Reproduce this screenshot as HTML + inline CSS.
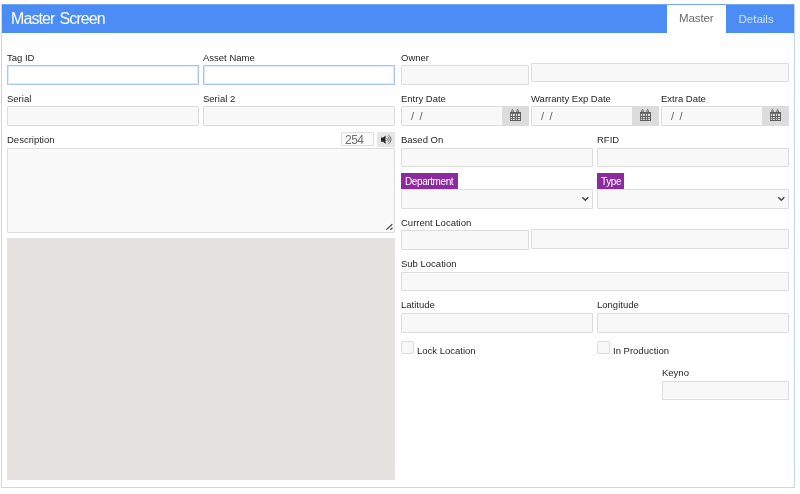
<!DOCTYPE html>
<html><head><meta charset="utf-8">
<style>
html,body{margin:0;will-change:transform;padding:0;background:#fff;width:800px;height:494px;overflow:hidden;font-family:"Liberation Sans",sans-serif;}
.a{position:absolute;box-sizing:border-box;}
.frame{left:1px;top:4px;width:794px;height:484px;border:1px solid #c2d6f8;}
.hdr{left:2px;top:4px;width:792px;height:29px;background:#4c8df5;border-top:1px solid #78a6f6;}
.title{left:11px;color:#fff;font-size:16px;letter-spacing:-0.9px;word-spacing:1.5px;top:10px;}
.tab1{left:667px;top:5px;width:59px;height:28px;background:#fff;color:#6a6a6a;font-size:11.5px;line-height:26.5px;padding-left:12px;letter-spacing:-0.1px;}
.tab2{left:726px;top:5px;width:68px;height:28px;color:#d2e2fc;font-size:11.5px;line-height:28px;padding-left:12.5px;letter-spacing:0px;}
.lbl{font-size:9.5px;color:#262626;white-space:nowrap;}
.in{background:#f8f8f8;border:1px solid #dddddd;border-radius:1px;}
.focus{background:#fff;border:1px solid #a9c6f6;box-shadow:inset 0 0 0 1px #dce8fc;border-radius:0;}
.cal{background:#dcdcdc;}
.date{font-size:11px;color:#666;padding-left:9px;line-height:18px;word-spacing:2.5px;}
.badge{background:#8c2a9f;color:#fff;font-size:10px;line-height:17px;height:16px;padding:0 0 0 4px;letter-spacing:-0.4px;}
.grey{background:#e4e2de;}
</style></head><body>
<div class="a frame"></div>
<div class="a hdr"></div>
<div class="a title">Master Screen</div>
<div class="a tab1">Master</div>
<div class="a tab2">Details</div>

<!-- left column -->
<div class="a lbl" style="left:7px;top:52px">Tag ID</div>
<div class="a in focus" style="left:7px;top:65px;width:192px;height:20px"></div>
<div class="a lbl" style="left:203px;top:52px">Asset Name</div>
<div class="a in focus" style="left:203px;top:65px;width:192px;height:20px"></div>

<div class="a lbl" style="left:7px;top:93px">Serial</div>
<div class="a in" style="left:7px;top:106px;width:192px;height:20px"></div>
<div class="a lbl" style="left:203px;top:93px">Serial 2</div>
<div class="a in" style="left:203px;top:106px;width:192px;height:20px"></div>

<div class="a lbl" style="left:7px;top:134px">Description</div>
<div class="a in" style="left:341px;top:132px;width:33px;height:14px;background:#fafafa;border-color:#dedede;color:#707070;font-size:12px;line-height:14px;padding-left:3px;letter-spacing:-0.5px">254</div>
<div class="a" style="left:377px;top:132px;width:18px;height:15px;background:#e6e6e6"><svg width="18" height="15" viewBox="0 0 18 15" style="position:absolute;left:0;top:0"><path d="M4 5.5h2.2L8.6 3.5v8.5L6.2 9.8H4z" fill="#2a2a2a"/><path d="M9.6 6.2a1.6 1.6 0 0 1 0 2.6M10.6 4.6a3.4 3.4 0 0 1 0 5.8M11.4 3.2a4.8 4.8 0 0 1 0 8.6" stroke="#5a5a5a" stroke-width="0.9" fill="none"/></svg></div>
<div class="a in" style="left:7px;top:148px;width:388px;height:85px;background:#f9f9f9"></div>
<svg class="a" width="10" height="10" viewBox="0 0 10 10" style="left:384px;top:222px"><path d="M2.3 7.6L8.3 2.3M6.3 7.7L8.5 5.8" stroke="#444" stroke-width="1.2" fill="none"/></svg>
<div class="a grey" style="left:7px;top:238px;width:388px;height:242px"></div>

<!-- right column -->
<div class="a lbl" style="left:401px;top:52px">Owner</div>
<div class="a in" style="left:401px;top:65px;width:128px;height:20px"></div>
<div class="a in" style="left:531px;top:63px;width:258px;height:19px"></div>

<div class="a lbl" style="left:401px;top:93px">Entry Date</div>
<div class="a in date" style="left:401px;top:106px;width:128px;height:20px">/ /</div>
<div class="a cal" style="left:502px;top:106px;width:27px;height:20px"><svg width="11" height="12" viewBox="0 0 11 12" style="position:absolute;left:8px;top:3px"><path fill="#5e5e5e" d="M0 3h11v9H0z M1.1 3.2L1.6 0.9L2.5 0L3.4 0.9L3.9 3.2z M6.2 3.2L6.7 0.9L7.6 0L8.5 0.9L9 3.2z"/><path fill="#dcdcdc" d="M0.8 4.8h1.3v2.1h-1.3zM2.9 4.8h2.0v2.1h-2.0zM5.9 4.8h1.2v2.1h-1.2zM8.0 4.8h2.0v2.1h-2.0zM0.8 8.0h1.3v1.2h-1.3zM2.9 8.0h2.0v1.2h-2.0zM5.9 8.0h1.2v1.2h-1.2zM8.0 8.0h2.0v1.2h-2.0zM0.8 10.0h1.3v1.0h-1.3zM2.9 10.0h2.0v1.0h-2.0zM5.9 10.0h1.2v1.0h-1.2zM8.0 10.0h2.0v1.0h-2.0z"/><path fill="#c8c8c8" d="M2.1 1.3h0.8v1.4h-0.8zM7.2 1.3h0.8v1.4h-0.8z"/></svg></div>
<div class="a lbl" style="left:531px;top:93px">Warranty Exp Date</div>
<div class="a in date" style="left:531px;top:106px;width:128px;height:20px">/ /</div>
<div class="a cal" style="left:632px;top:106px;width:27px;height:20px"><svg width="11" height="12" viewBox="0 0 11 12" style="position:absolute;left:8px;top:3px"><path fill="#5e5e5e" d="M0 3h11v9H0z M1.1 3.2L1.6 0.9L2.5 0L3.4 0.9L3.9 3.2z M6.2 3.2L6.7 0.9L7.6 0L8.5 0.9L9 3.2z"/><path fill="#dcdcdc" d="M0.8 4.8h1.3v2.1h-1.3zM2.9 4.8h2.0v2.1h-2.0zM5.9 4.8h1.2v2.1h-1.2zM8.0 4.8h2.0v2.1h-2.0zM0.8 8.0h1.3v1.2h-1.3zM2.9 8.0h2.0v1.2h-2.0zM5.9 8.0h1.2v1.2h-1.2zM8.0 8.0h2.0v1.2h-2.0zM0.8 10.0h1.3v1.0h-1.3zM2.9 10.0h2.0v1.0h-2.0zM5.9 10.0h1.2v1.0h-1.2zM8.0 10.0h2.0v1.0h-2.0z"/><path fill="#c8c8c8" d="M2.1 1.3h0.8v1.4h-0.8zM7.2 1.3h0.8v1.4h-0.8z"/></svg></div>
<div class="a lbl" style="left:661px;top:93px">Extra Date</div>
<div class="a in date" style="left:661px;top:106px;width:128px;height:20px">/ /</div>
<div class="a cal" style="left:762px;top:106px;width:27px;height:20px"><svg width="11" height="12" viewBox="0 0 11 12" style="position:absolute;left:8px;top:3px"><path fill="#5e5e5e" d="M0 3h11v9H0z M1.1 3.2L1.6 0.9L2.5 0L3.4 0.9L3.9 3.2z M6.2 3.2L6.7 0.9L7.6 0L8.5 0.9L9 3.2z"/><path fill="#dcdcdc" d="M0.8 4.8h1.3v2.1h-1.3zM2.9 4.8h2.0v2.1h-2.0zM5.9 4.8h1.2v2.1h-1.2zM8.0 4.8h2.0v2.1h-2.0zM0.8 8.0h1.3v1.2h-1.3zM2.9 8.0h2.0v1.2h-2.0zM5.9 8.0h1.2v1.2h-1.2zM8.0 8.0h2.0v1.2h-2.0zM0.8 10.0h1.3v1.0h-1.3zM2.9 10.0h2.0v1.0h-2.0zM5.9 10.0h1.2v1.0h-1.2zM8.0 10.0h2.0v1.0h-2.0z"/><path fill="#c8c8c8" d="M2.1 1.3h0.8v1.4h-0.8zM7.2 1.3h0.8v1.4h-0.8z"/></svg></div>

<div class="a lbl" style="left:401px;top:134px">Based On</div>
<div class="a in" style="left:401px;top:148px;width:192px;height:19px"></div>
<div class="a lbl" style="left:597px;top:134px">RFID</div>
<div class="a in" style="left:597px;top:148px;width:192px;height:19px"></div>

<div class="a badge" style="left:401px;top:173px;width:57px">Department</div>
<div class="a in" style="left:401px;top:189px;width:192px;height:20px"><svg width="9" height="6" viewBox="0 0 9 6" style="position:absolute;right:2px;top:6px"><path d="M1.3 1.2l3 3 3-3" stroke="#444" stroke-width="1.5" fill="none"/></svg></div>
<div class="a badge" style="left:597px;top:173px;width:27px;padding-left:4px">Type</div>
<div class="a in" style="left:597px;top:189px;width:192px;height:20px"><svg width="9" height="6" viewBox="0 0 9 6" style="position:absolute;right:2px;top:6px"><path d="M1.3 1.2l3 3 3-3" stroke="#444" stroke-width="1.5" fill="none"/></svg></div>

<div class="a lbl" style="left:401px;top:217px">Current Location</div>
<div class="a in" style="left:401px;top:230px;width:128px;height:20px"></div>
<div class="a in" style="left:531px;top:229px;width:258px;height:20px"></div>

<div class="a lbl" style="left:401px;top:258px">Sub Location</div>
<div class="a in" style="left:401px;top:272px;width:388px;height:19px"></div>

<div class="a lbl" style="left:401px;top:299px">Latitude</div>
<div class="a in" style="left:401px;top:313px;width:192px;height:20px"></div>
<div class="a lbl" style="left:597px;top:299px">Longitude</div>
<div class="a in" style="left:597px;top:313px;width:192px;height:20px"></div>

<div class="a in" style="left:401px;top:341px;width:13px;height:13px;border-radius:2px"></div>
<div class="a lbl" style="left:417px;top:345px">Lock Location</div>
<div class="a in" style="left:597px;top:341px;width:13px;height:13px;border-radius:2px"></div>
<div class="a lbl" style="left:613px;top:345px">In Production</div>

<div class="a lbl" style="left:662px;top:367px">Keyno</div>
<div class="a in" style="left:662px;top:381px;width:127px;height:19px"></div>
</body></html>
